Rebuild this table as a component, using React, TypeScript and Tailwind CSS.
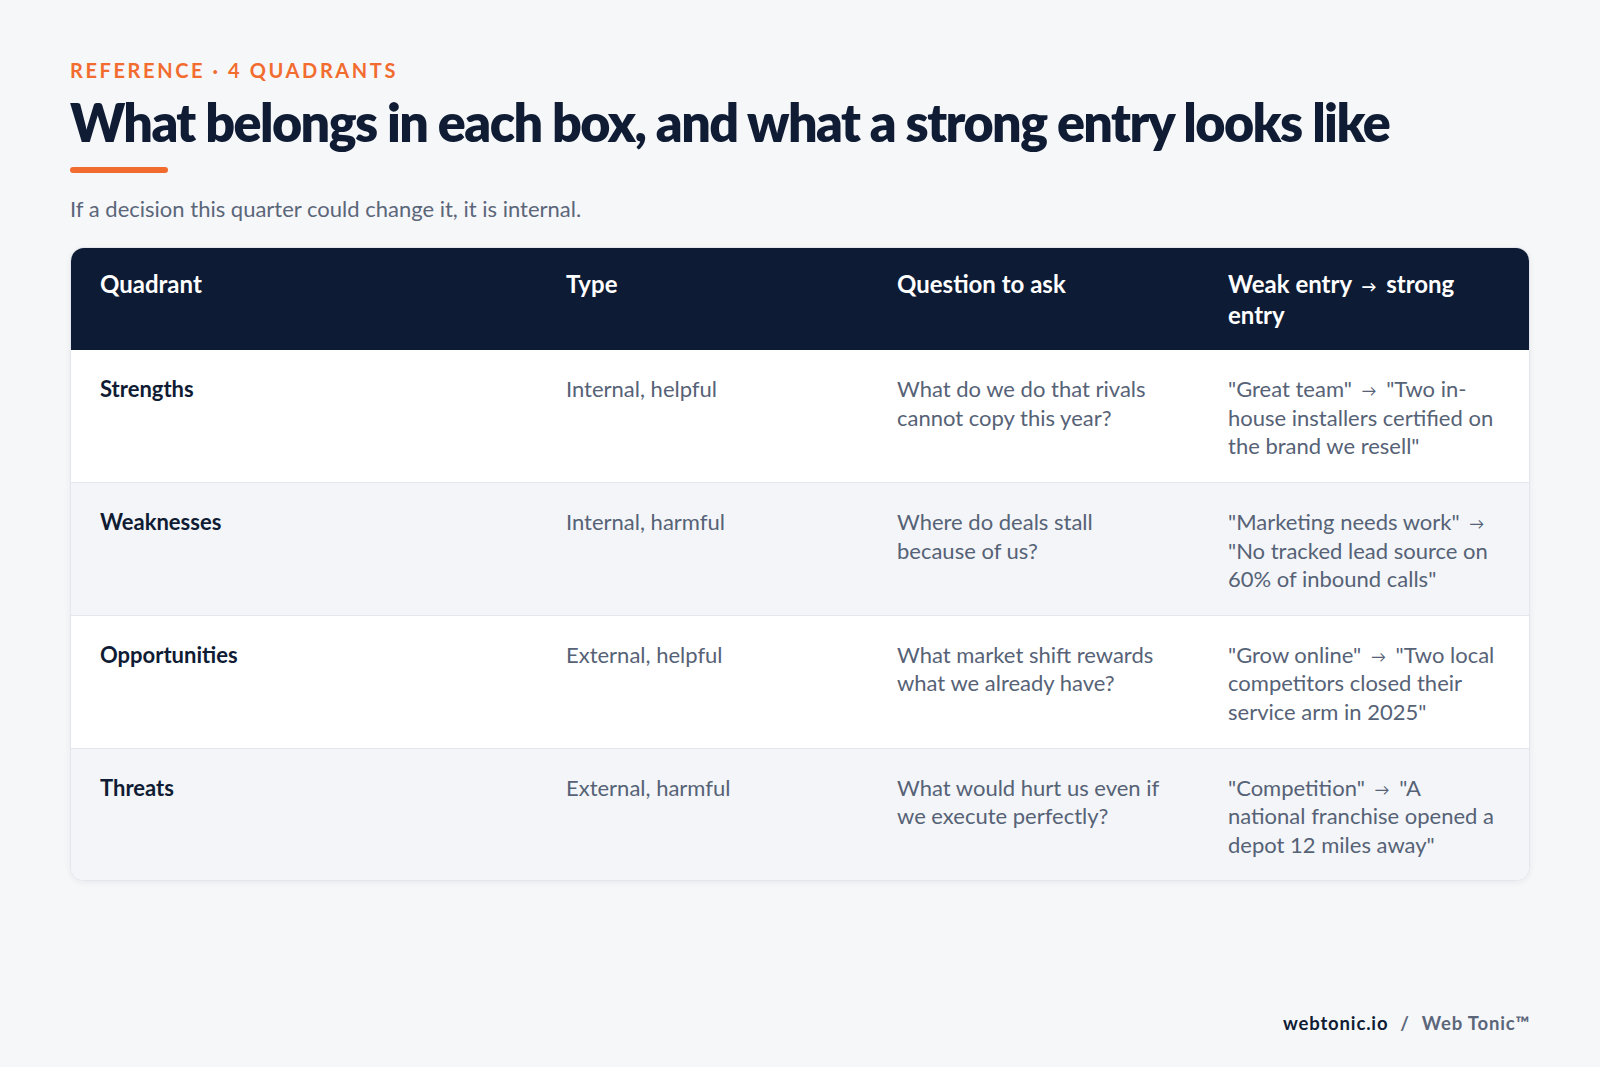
const rows = [
  {
    name: "Strengths",
    type: "Internal, helpful",
    question: "What do we do that rivals cannot copy this year?",
    weak: '"Great team"',
    strong: '"Two in-house installers certified on the brand we resell"',
  },
  {
    name: "Weaknesses",
    type: "Internal, harmful",
    question: "Where do deals stall because of us?",
    weak: '"Marketing needs work"',
    strong: '"No tracked lead source on 60% of inbound calls"',
  },
  {
    name: "Opportunities",
    type: "External, helpful",
    question: "What market shift rewards what we already have?",
    weak: '"Grow online"',
    strong: '"Two local competitors closed their service arm in 2025"',
  },
  {
    name: "Threats",
    type: "External, harmful",
    question: "What would hurt us even if we execute perfectly?",
    weak: '"Competition"',
    strong: '"A national franchise opened a depot 12 miles away"',
  },
];

const Arrow = () => <span className="mx-[4px] text-[15px] align-[1px]">→</span>;

export default function App() {
  return (
    <div className="flex h-[1067px] flex-col bg-[#f6f7f9] px-[70px] font-['Lato',sans-serif] text-[#0f1c34]">
      {/* Heading */}
      <div className="pt-[60px] text-[20px] font-bold leading-none tracking-[0.13em] text-[#f26c2f]">
        REFERENCE · 4 QUADRANTS
      </div>
      <h1 className="mt-[14px] text-[52px] font-extrabold leading-[1.1] tracking-[-0.03em] text-[#0f1c34]">
        What belongs in each box, and what a strong entry looks like
      </h1>
      <div className="mt-[16px] h-[6px] w-[98px] rounded-full bg-[#f26c2f]" />
      <p className="mt-[21px] text-[22px] leading-[1.4] text-[#5b6679]">
        If a decision this quarter could change it, it is internal.
      </p>

      {/* Table */}
      <div className="mt-[22px] overflow-hidden rounded-[14px] border border-[#e3e7ed] bg-white shadow-[0_2px_6px_rgba(15,28,52,0.06)]">
        <div className="grid grid-cols-[466px_331px_331px_1fr] bg-[#0d1b34] text-[24px] font-bold leading-[1.275] text-white">
          <div className="px-[29px] pt-[21px] pb-[20px]">Quadrant</div>
          <div className="px-[29px] pt-[21px] pb-[20px]">Type</div>
          <div className="px-[29px] pt-[21px] pb-[20px]">Question to ask</div>
          <div className="px-[29px] pt-[21px] pb-[20px]">
            Weak entry <Arrow /> strong entry
          </div>
        </div>
        {rows.map((r, i) => (
          <div
            key={r.name}
            className={`grid grid-cols-[466px_331px_331px_1fr] text-[22px] leading-[1.3] ${
              i % 2 === 1 ? "bg-[#f3f5f8]" : "bg-white"
            } ${i > 0 ? "border-t border-[#e3e7ed]" : ""}`}
          >
            <div className="px-[29px] pt-[25px] pb-[21px] font-bold text-[#0f1c34]">{r.name}</div>
            <div className="px-[29px] pt-[25px] pb-[21px] text-[#566276]">{r.type}</div>
            <div className="px-[29px] pt-[25px] pb-[21px] text-[#566276]">{r.question}</div>
            <div className="px-[29px] pt-[25px] pb-[21px] text-[#566276]">
              {r.weak} <Arrow /> {r.strong}
            </div>
          </div>
        ))}
      </div>

      {/* Footer */}
      <div className="mt-auto flex justify-end gap-[12px] pb-[29px] text-[18.5px] font-bold tracking-[0.045em]">
        <span className="text-[#0f1c34]">webtonic.io</span>
        <span className="text-[#5b6679]">/</span>
        <span className="text-[#5b6679]">Web Tonic™</span>
      </div>
    </div>
  );
}
